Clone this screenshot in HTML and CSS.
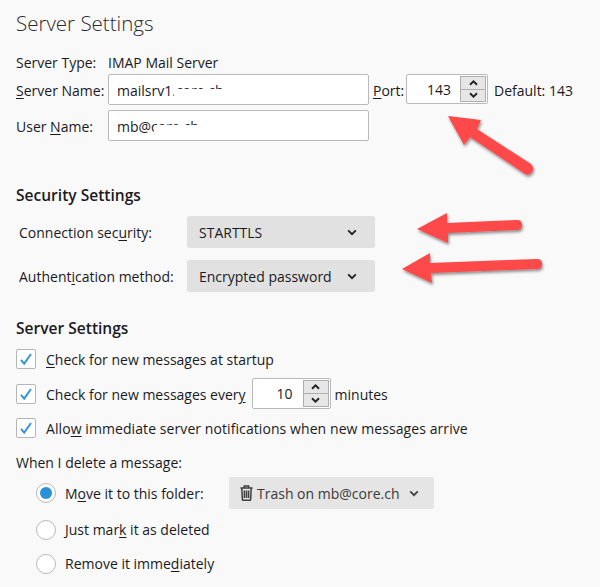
FILE: index.html
```html
<!DOCTYPE html>
<html lang="en">
<head>
<meta charset="utf-8">
<title>Server Settings</title>
<link rel="stylesheet" href="styles.css">
</head>
<body>
<main class="page">
  <h1 class="title">Server Settings</h1>
  <div class="type-row"><span class="lbl-top">Server Type:</span><span>IMAP Mail Server</span></div>
  <div class="field-row name-row">
    <label class="lbl-top"><u>S</u>erver Name:</label>
    <div class="input"><span>mailsrv1.core.ch</span><i class="mask mask-server"></i></div>
    <label class="port-label"><u>P</u>ort:</label>
    <div class="spin port-spin"><span class="spin-value">143</span>
      <div class="spin-btns">
        <div class="spin-btn"><svg width="9" height="6" viewBox="0 0 9 6"><path d="M1 4.8 4.5 1.4 8 4.8" class="chev"/></svg></div>
        <div class="spin-btn"><svg width="9" height="6" viewBox="0 0 9 6"><path d="M1 1.2 4.5 4.6 8 1.2" class="chev"/></svg></div>
      </div>
    </div>
    <span class="default">Default: 143</span>
  </div>
  <div class="field-row user-row">
    <label class="lbl-top">User <u>N</u>ame:</label>
    <div class="input"><span>mb@core.ch</span><i class="mask mask-user"></i></div>
  </div>

  <h2 class="section sec-security">Security Settings</h2>
  <div class="select-row conn-row">
    <label class="sel-label">Connection sec<u>u</u>rity:</label>
    <div class="select"><span>STARTTLS</span><svg width="10" height="7" viewBox="0 0 10 7"><path d="M1.2 1.4 5 5.2 8.8 1.4" class="chev"/></svg></div>
  </div>
  <div class="select-row auth-row">
    <label class="sel-label">Authent<u>i</u>cation method:</label>
    <div class="select"><span>Encrypted password</span><svg width="10" height="7" viewBox="0 0 10 7"><path d="M1.2 1.4 5 5.2 8.8 1.4" class="chev"/></svg></div>
  </div>

  <h2 class="section sec-server">Server Settings</h2>
  <div class="check-row first">
    <span class="check"><svg width="14" height="14" viewBox="0 0 14 14"><path d="M2 7.8 5.2 11.6 12 2" class="tick"/></svg></span>
    <span><u>C</u>heck for new messages at startup</span>
  </div>
  <div class="check-row second">
    <span class="check"><svg width="14" height="14" viewBox="0 0 14 14"><path d="M2 7.8 5.2 11.6 12 2" class="tick"/></svg></span>
    <span>Check for new messages ever<u>y</u></span>
    <div class="spin every-spin"><span class="spin-value">10</span>
      <div class="spin-btns">
        <div class="spin-btn"><svg width="9" height="6" viewBox="0 0 9 6"><path d="M1 4.8 4.5 1.4 8 4.8" class="chev"/></svg></div>
        <div class="spin-btn"><svg width="9" height="6" viewBox="0 0 9 6"><path d="M1 1.2 4.5 4.6 8 1.2" class="chev"/></svg></div>
      </div>
    </div>
    <span>minutes</span>
  </div>
  <div class="check-row third">
    <span class="check"><svg width="14" height="14" viewBox="0 0 14 14"><path d="M2 7.8 5.2 11.6 12 2" class="tick"/></svg></span>
    <span class="long">Allo<u>w</u> immediate server notifications when new messages arrive</span>
  </div>

  <p class="when">When I delete a message:</p>
  <div class="radio-row move-row">
    <span class="radio on"></span>
    <span class="move-label">M<u>o</u>ve it to this folder:</span>
    <div class="select folder">
      <svg class="trash" width="13" height="16" viewBox="0 0 13 16"><path d="M4.3 2.4V1h4.4v1.4M.4 3h12.2M1.8 3.2l.6 11.2c0 .5.3.9.9.9h6.4c.6 0 .9-.4.9-.9l.6-11.2M4.4 5.6v7.4M6.5 5.6v7.4M8.6 5.6v7.4" fill="none" stroke="#3f3f3f" stroke-width="1.5"/></svg>
      <span>Trash on mb@core.ch</span>
      <svg width="10" height="7" viewBox="0 0 10 7"><path d="M1.2 1.4 5 5.2 8.8 1.4" class="chev chev-soft"/></svg>
    </div>
  </div>
  <div class="radio-row plain mark-row"><span class="radio"></span><span>Just mar<u>k</u> it as deleted</span></div>
  <div class="radio-row plain remove-row"><span class="radio"></span><span>Remove it imme<u>d</u>iately</span></div>
</main>

<svg class="arrows" width="600" height="587" viewBox="0 0 600 587" aria-hidden="true">
  <defs><filter id="sh" x="-20%" y="-20%" width="140%" height="140%"><feDropShadow dx="1" dy="2" stdDeviation="1.6" flood-color="#000" flood-opacity=".45"/></filter></defs>
  <g filter="url(#sh)" fill="#fd4848">
    <path d="M448 116 481 120 477 129 531 164Q535 168 532 172Q529 176 525 174L470 137 464 145Z"/>
    <path d="M417 229 447 213 447 223 517 220Q522 220 522 225Q522 230 517 230L448 233 448 243Z"/>
    <path d="M402 269 430 253 430 263 537 259Q542 259 542 264Q542 269 537 269L431 273 432 283Z"/>
  </g>
</svg>
</body>
</html>
```

FILE: styles.css
```css
* { box-sizing: border-box; }
html, body { margin: 0; padding: 0; }
body {
  width: 600px;
  height: 587px;
  overflow: hidden;
  background: #f9f9f9;
  color: #1a1a1f;
  font-family: "Open Sans", "Noto Sans", sans-serif;
  font-size: 14px;
  line-height: 20px;
  position: relative;
}
u { text-underline-offset: 2px; text-decoration-thickness: 1px; }
.page { padding: 10px 0 0 16px; }
.title { margin: 0; font-size: 20.5px; font-weight: 300; line-height: 26px; color: #2a2a2e; }
.type-row { display: flex; margin-top: 17px; height: 20px; align-items: center; }
.lbl-top { width: 92px; flex: none; }
.field-row { display: flex; align-items: center; }
.name-row { margin-top: 1px; height: 31px; }
.user-row { margin-top: 5px; height: 31px; }

/* Open Sans sits a pixel higher than the original face; nudge the text, not the controls */
.field-row > label, .field-row > .default, .input > span, .spin-value,
.select > span, .sel-label,
.check-row > span:not(.check), .move-row > span:not(.radio) { padding-top: 2px; }

.input {
  position: relative;
  width: 261px;
  height: 31px;
  padding: 0 8px;
  display: flex;
  align-items: center;
  background: #fff;
  border: 1px solid #b9b9b9;
  border-radius: 2px;
}
.mask { position: absolute; background: #fff; height: 9px; top: 14px; }
.mask-server { left: 65px; width: 80px; }
.mask-user { left: 45px; width: 70px; }
.port-label { margin-left: 4px; width: 33px; }
.spin {
  display: flex;
  align-items: stretch;
  background: #fff;
  border: 1px solid #b9b9b9;
  border-radius: 2px;
  padding: 1px;
}
.port-spin { width: 82px; height: 30px; margin-bottom: 1px; }
.every-spin { width: 79px; height: 31px; margin: 0 4px 2px 6px; }
.spin-value { flex: 1; text-align: right; padding-right: 9px; align-self: center; }
.every-spin .spin-value { padding-right: 10px; }
.spin-btns { width: 26px; display: flex; flex-direction: column; gap: 0; }
.spin-btn {
  flex: 1;
  display: flex;
  align-items: center;
  justify-content: center;
  background: #e6e6e6;
  border: 1px solid #aeaeae;
}
.spin-btn + .spin-btn { border-top: 0; }
.default { margin-left: 6px; }
.chev { fill: none; stroke: #222; stroke-width: 1.9; }
.chev-soft { stroke: #444; }

.section { margin: 0; font-size: 15.55px; font-weight: 600; line-height: 20px; color: #1a1a1f; }
.sec-security { margin-top: 44px; }
.select-row { display: flex; align-items: center; height: 32px; }
.conn-row { margin-top: 11px; }
.auth-row { margin-top: 12px; }
.sel-label { width: 168px; margin-left: 3px; flex: none; }
.select {
  display: flex;
  align-items: center;
  justify-content: space-between;
  width: 188px;
  height: 32px;
  padding: 0 18px 0 12px;
  background: #e1e1e1;
  border-radius: 2px;
}
.sec-server { margin-top: 26px; }
.check-row { display: flex; align-items: center; height: 20px; }
.check-row.first { margin-top: 11px; }
.check-row.second { margin-top: 15px; }
.check-row.third { margin-top: 14px; }
.check {
  width: 20px;
  height: 20px;
  margin-right: 10px;
  flex: none;
  display: flex;
  align-items: center;
  justify-content: center;
  background: #fff;
  border: 1px solid #b5b5b5;
  border-radius: 2px;
}
.tick { fill: none; stroke: #2e94dc; stroke-width: 1.9; }
.long { letter-spacing: .08px; white-space: nowrap; }
.when { margin: 15px 0 0; height: 20px; }
.radio-row { display: flex; align-items: center; padding-left: 20px; height: 20px; }
.move-row { margin-top: 10px; height: 20px; }
.mark-row { margin-top: 17px; }
.remove-row { margin-top: 14px; }
.radio {
  width: 20px;
  height: 20px;
  margin-right: 9px;
  flex: none;
  border: 1px solid #b9b9b9;
  border-radius: 50%;
  background: #fff;
  display: flex;
  align-items: center;
  justify-content: center;
}
.radio.on::after { content: ""; width: 12px; height: 12px; border-radius: 50%; background: #2a90d8; }
.move-label { width: 164px; flex: none; }
.folder {
  width: 205px;
  background: #e5e5e5;
  color: #3a3a3a;
  padding: 0 15px 0 11px;
  justify-content: flex-start;
  gap: 4px;
  flex: none;
  white-space: nowrap;
}
.folder svg:last-child { margin-left: auto; }
.trash { flex: none; }
.arrows { position: absolute; left: 0; top: 0; pointer-events: none; }
```
